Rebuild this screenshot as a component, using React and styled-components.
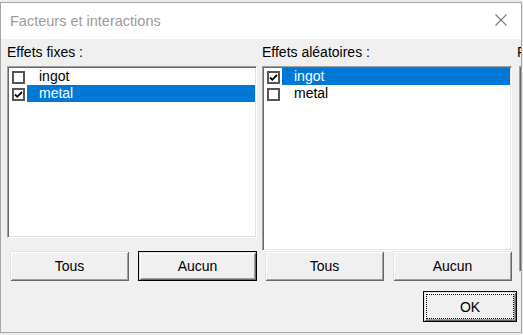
import React from "react";
import styled, { createGlobalStyle, css } from "styled-components";

const Global = createGlobalStyle`
  html, body { margin: 0; padding: 0; }
  body {
    background: #ececec;
    font-family: "Liberation Sans", Arial, sans-serif;
    width: 523px;
    height: 335px;
    overflow: hidden;
  }
  * { box-sizing: border-box; }
`;

const Page = styled.div`
  padding-top: 2px;
`;

const Window = styled.div`
  width: 522px;
  height: 331px;
  border: 1px solid #a6a6a6;
  display: flex;
  flex-direction: column;
  overflow: hidden;
  background: #f0f0f0;
`;

const TitleBar = styled.div`
  height: 36px;
  flex-shrink: 0;
  background: #ffffff;
  display: flex;
  align-items: center;
  justify-content: space-between;
  padding: 0 14px 1px 9px;
`;

const Title = styled.span`
  font-size: 14.5px;
  color: #9b9b9b;
`;

const CloseIcon = styled.svg`
  width: 12px;
  height: 12px;
  margin-bottom: 2px;
`;

const Body = styled.div`
  flex: 1;
  display: flex;
  flex-direction: column;
  padding-top: 5px;
`;

const Columns = styled.div`
  display: flex;
  gap: 5px;
  padding-left: 6px;
`;

const Column = styled.div`
  width: 250px;
  flex-shrink: 0;
  display: flex;
  flex-direction: column;
`;

const Label = styled.div`
  font-size: 14px;
  line-height: 17px;
  height: 17px;
  color: #000;
  white-space: nowrap;
  margin-bottom: 5px;
`;

const ListBox = styled.div`
  height: ${(p) => p.$h}px;
  margin-left: ${(p) => p.$offset || 0}px;
  background: #ffffff;
  border: 1px solid;
  border-color: #a0a0a0 #ffffff #ffffff #a0a0a0;
  box-shadow: inset 1px 1px 0 #696969, inset -1px -1px 0 #e3e3e3;
  padding: 1px;
  display: flex;
  flex-direction: column;
`;

const Row = styled.div`
  display: flex;
  height: 17px;
`;

const Check = styled.span`
  width: 13px;
  height: 13px;
  margin: 3px 0 0 3px;
  border: 2px solid #555555;
  background: #ffffff;
  flex-shrink: 0;
  display: flex;
`;

const ItemText = styled.span`
  flex: 1;
  margin-left: 2px;
  padding-left: 12px;
  font-size: 14px;
  line-height: 17px;
  color: ${(p) => (p.$selected ? "#ffffff" : "#000000")};
  background: ${(p) => (p.$selected ? "#0078d7" : "transparent")};
`;

const ButtonRow = styled.div`
  display: flex;
  gap: 9px;
  padding-left: 3px;
  margin-top: auto;
`;

const bevel = css`
  box-shadow: inset 1px 1px 0 #e3e3e3, inset -1px -1px 0 #696969,
    inset 2px 2px 0 #ffffff, inset -2px -2px 0 #a0a0a0;
`;

const Button = styled.button`
  width: 120px;
  height: 30px;
  background: #f0f0f0;
  font-family: "Liberation Sans", Arial, sans-serif;
  font-size: 14px;
  color: #000;
  padding: 0;
  border: ${(p) => (p.$default ? "1px solid #000000" : "none")};
  ${bevel}
  display: flex;
  align-items: center;
  justify-content: center;
`;

const Footer = styled.div`
  display: flex;
  justify-content: flex-end;
  padding-right: 4px;
  margin-top: 10px;
`;

const OkButton = styled.button`
  width: 94px;
  height: 31px;
  background: #f0f0f0;
  border: 1px solid #000000;
  ${bevel}
  padding: 2px;
  display: flex;
  font-family: "Liberation Sans", Arial, sans-serif;
  font-size: 14px;
  color: #000;
`;

const FocusRing = styled.span`
  flex: 1;
  border: 1px dotted #000000;
  display: flex;
  align-items: center;
  justify-content: center;
`;

const CheckMark = () => (
  <svg width="9" height="9" viewBox="0 0 9 9">
    <polyline points="1,4.5 3.3,6.8 8,2" fill="none" stroke="#000" strokeWidth="1.8" />
  </svg>
);

const Item = ({ checked, selected, children }) => (
  <Row>
    <Check>{checked && <CheckMark />}</Check>
    <ItemText $selected={selected}>{children}</ItemText>
  </Row>
);

export default function App() {
  return (
    <>
      <Global />
      <Page>
        <Window>
          <TitleBar>
            <Title>Facteurs et interactions</Title>
            <CloseIcon viewBox="0 0 12 12">
              <path d="M0.5 0.5 L11.5 11.5 M11.5 0.5 L0.5 11.5" stroke="#7a7a7a" strokeWidth="1.1" fill="none" />
            </CloseIcon>
          </TitleBar>
          <Body>
            <Columns>
              <Column>
                <Label>Effets fixes :</Label>
                <ListBox $h={172}>
                  <Item>ingot</Item>
                  <Item checked selected>metal</Item>
                </ListBox>
                <ButtonRow>
                  <Button>Tous</Button>
                  <Button $default>Aucun</Button>
                </ButtonRow>
              </Column>
              <Column>
                <Label>Effets aléatoires :</Label>
                <ListBox $h={185}>
                  <Item checked selected>ingot</Item>
                  <Item>metal</Item>
                </ListBox>
                <ButtonRow>
                  <Button>Tous</Button>
                  <Button>Aucun</Button>
                </ButtonRow>
              </Column>
              <Column>
                <Label>Facteurs :</Label>
                <ListBox $h={206} $offset={2} />
              </Column>
            </Columns>
            <Footer>
              <OkButton>
                <FocusRing>OK</FocusRing>
              </OkButton>
            </Footer>
          </Body>
        </Window>
      </Page>
    </>
  );
}
